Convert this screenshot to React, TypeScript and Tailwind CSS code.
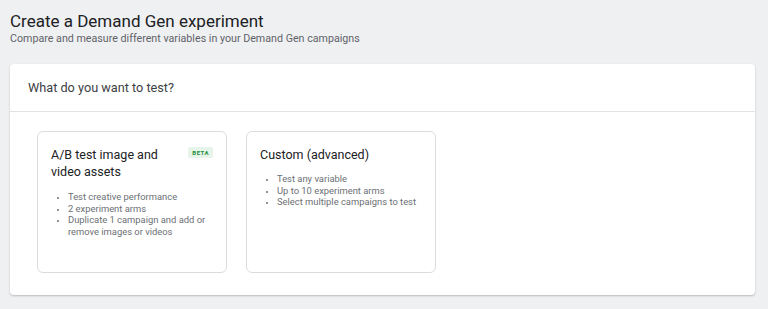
const OPTIONS = [
  {
    title: "A/B test image and video assets",
    beta: true,
    points: [
      "Test creative performance",
      "2 experiment arms",
      "Duplicate 1 campaign and add or remove images or videos",
    ],
  },
  {
    title: "Custom (advanced)",
    beta: false,
    points: [
      "Test any variable",
      "Up to 10 experiment arms",
      "Select multiple campaigns to test",
    ],
  },
];

export default function App() {
  return (
    <div className="w-[768px] h-[309px] overflow-hidden bg-[#eff0f2] px-[10px] pt-[10px] font-['Roboto',sans-serif]">
      <h1 className="text-[17px] leading-[22px] text-[#202124]">Create a Demand Gen experiment</h1>
      <p className="text-[10.7px] leading-[14px] text-[#5f6368]">
        Compare and measure different variables in your Demand Gen campaigns
      </p>

      <div className="mt-[18px] w-[745px] rounded-[4px] bg-white shadow-[0_1px_2px_rgba(60,64,67,0.3)]">
        <div className="flex h-[48px] items-center border-b border-[#e3e3e3] px-[18px]">
          <span className="text-[12.7px] text-[#3c4043]">What do you want to test?</span>
        </div>

        <div className="flex gap-[19px] px-[27px] pt-[19px] pb-[22px]">
          {OPTIONS.map((opt) => (
            <div
              key={opt.title}
              className="h-[142px] w-[190px] rounded-[6px] border border-[#dadce0] px-[13px] pt-[14px]"
            >
              <div className="flex items-start justify-between">
                <h2 className="w-[120px] text-[12.5px] leading-[17px] text-[#202124]">{opt.title}</h2>
                {opt.beta && (
                  <span className="mt-px rounded-[2px] bg-[#e6f4ea] px-[4px] py-[2px] text-[6px] font-bold leading-[7px] tracking-[0.5px] text-[#1e8e3e]">
                    BETA
                  </span>
                )}
              </div>
              <ul className={`${opt.beta ? "mt-[11px]" : "mt-[10px]"} list-disc pl-[17px] text-[9.4px] leading-[11.7px] text-[#6b6f74] marker:text-[7px]`}>
                {opt.points.map((p) => (
                  <li key={p}>{p}</li>
                ))}
              </ul>
            </div>
          ))}
        </div>
      </div>
    </div>
  );
}
